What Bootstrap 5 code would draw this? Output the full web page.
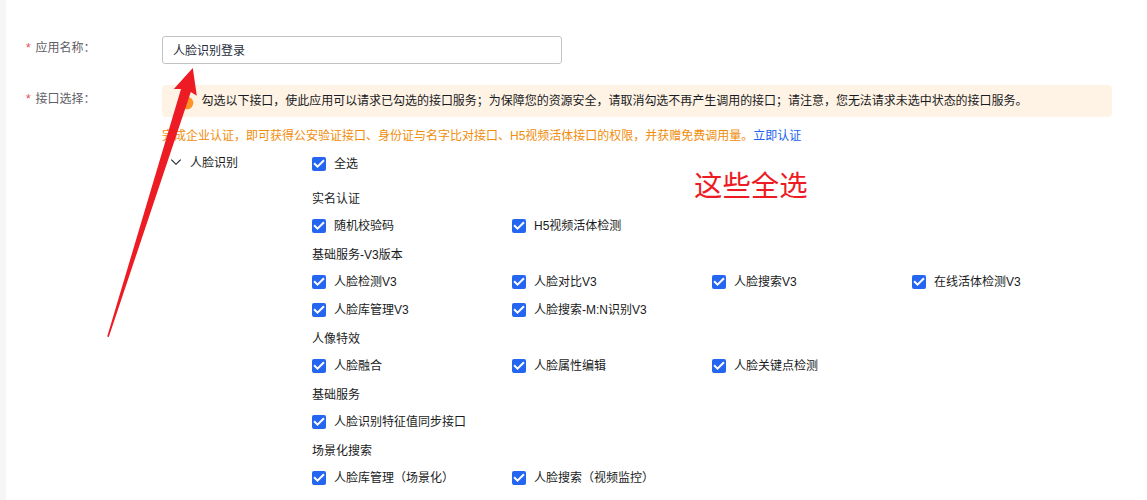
<!DOCTYPE html>
<html lang="zh-CN">
<head>
<meta charset="utf-8">
<meta name="viewport" content="width=device-width, initial-scale=1">
<title>应用</title>
<link href="https://cdn.jsdelivr.net/npm/bootstrap@5.3.0/dist/css/bootstrap.min.css" rel="stylesheet">
<style>
  body { font-family: "Liberation Sans", "Noto Sans CJK SC", sans-serif; font-size: 12px; line-height: 20px; color: #191b22; background: #fff; height: 500px; overflow: hidden; }
  .edge { width: 6px; background: #f6f6f8; }
  .panel { padding: 36px 35px 0 20px; }
  .field-label { width: 136px; color: #5f6066; padding-top: 2px; }
  .field-label.lower { padding-top: 4px; }
  .star { width: 9.5px; color: #e8494c; }
  .name-input { width: 400px; height: 28px; min-height: 0; padding: 0 10px 2px; font-size: 12px; color: #252b3a; border: 1px solid #c3c3c6; border-radius: 3px; }
  .notice { height: 32px; padding: 0 20px 0 18px; margin: 0; font-size: 12px; background: #fff3e6; color: #191b22; border: 0; border-radius: 4px; white-space: nowrap; }
  .notice svg { margin-right: 7.5px; margin-top: 3px; }
  .notice span { letter-spacing: -0.03px; }
  .tip { color: #f08d0b; margin-top: 9px; height: 20px; white-space: nowrap; }
  .tip a { color: #2062ee; }
  .tree { padding-left: 8px; margin-top: 4px; }
  .tree-head { width: 142px; height: 24px; }
  .tree-head svg { margin-right: 8px; }
  .tree-head span { padding-top: 2px; }
  .opt-all { height: 28px; margin-bottom: 6px; }
  .group-title, .opt { height: 28px; line-height: 28px; white-space: nowrap; }
  .group-title { padding-top: 1px; }
  .opt, .opt-all { width: 200px; }
  .opt { line-height: 30px; }
  .form-check-input.tick { width: 14px; height: 14px; margin: 0 8px 0 0; border-radius: 2px; flex: none; border: 0; float: none; }
  .form-check-input.tick:checked { background-color: #2566f0; background-size: 14px 14px; background-image: url("data:image/svg+xml,%3csvg xmlns='http://www.w3.org/2000/svg' viewBox='0 0 14 14'%3e%3cpath fill='none' stroke='%23fff' stroke-width='2' d='M2.1 6.2 5.5 9.6 12 3.2'/%3e%3c/svg%3e"); }
  .arrow-mark { left: 100px; top: 60px; pointer-events: none; }
  .red-note { left: 694px; top: 166px; font-size: 28.4px; line-height: 40px; color: #ed1c24; white-space: nowrap; }
</style>
</head>
<body>
<div class="d-flex h-100 position-relative">
  <div class="edge flex-shrink-0"></div>
  <main class="panel flex-grow-1">
    <div class="d-flex" style="height:49px">
      <label class="field-label d-flex flex-shrink-0" for="appName"><span class="star">*</span>应用名称：</label>
      <input id="appName" class="form-control name-input" type="text" value="人脸识别登录">
    </div>
    <div class="d-flex">
      <div class="field-label lower d-flex flex-shrink-0"><span class="star">*</span>接口选择：</div>
      <div class="flex-grow-1">
        <div class="alert notice d-flex align-items-center">
          <svg class="flex-shrink-0" width="14" height="14" viewBox="0 0 14 14"><circle cx="7" cy="7" r="6.3" fill="#ff9326"/></svg>
          <span>勾选以下接口，使此应用可以请求已勾选的接口服务；为保障您的资源安全，请取消勾选不再产生调用的接口；请注意，您无法请求未选中状态的接口服务。</span>
        </div>
        <div class="tip">完成企业认证，即可获得公安验证接口、身份证与名字比对接口、H5视频活体接口的权限，并获赠免费调用量。<a href="#" class="text-decoration-none">立即认证</a></div>
        <div class="tree d-flex">
          <div class="tree-head d-flex align-items-center flex-shrink-0">
            <svg width="12" height="12" viewBox="0 0 12 12"><path d="M1.3 3.6 6 8.3l4.7-4.7" fill="none" stroke="#191b22" stroke-width="1.1"/></svg>
            <span>人脸识别</span>
          </div>
          <div class="flex-grow-1">
            <label class="opt-all d-flex align-items-center"><input class="form-check-input tick" type="checkbox" checked>全选</label>

            <div class="group-title">实名认证</div>
            <div class="d-flex flex-wrap">
              <label class="opt d-flex align-items-center"><input class="form-check-input tick" type="checkbox" checked><span>随机校验码</span></label>
              <label class="opt d-flex align-items-center"><input class="form-check-input tick" type="checkbox" checked><span>H5视频活体检测</span></label>
            </div>

            <div class="group-title">基础服务-V3版本</div>
            <div class="d-flex flex-wrap">
              <label class="opt d-flex align-items-center"><input class="form-check-input tick" type="checkbox" checked><span>人脸检测V3</span></label>
              <label class="opt d-flex align-items-center"><input class="form-check-input tick" type="checkbox" checked><span>人脸对比V3</span></label>
              <label class="opt d-flex align-items-center"><input class="form-check-input tick" type="checkbox" checked><span>人脸搜索V3</span></label>
              <label class="opt d-flex align-items-center"><input class="form-check-input tick" type="checkbox" checked><span>在线活体检测V3</span></label>
              <label class="opt d-flex align-items-center"><input class="form-check-input tick" type="checkbox" checked><span>人脸库管理V3</span></label>
              <label class="opt d-flex align-items-center"><input class="form-check-input tick" type="checkbox" checked><span>人脸搜索-M:N识别V3</span></label>
            </div>

            <div class="group-title">人像特效</div>
            <div class="d-flex flex-wrap">
              <label class="opt d-flex align-items-center"><input class="form-check-input tick" type="checkbox" checked><span>人脸融合</span></label>
              <label class="opt d-flex align-items-center"><input class="form-check-input tick" type="checkbox" checked><span>人脸属性编辑</span></label>
              <label class="opt d-flex align-items-center"><input class="form-check-input tick" type="checkbox" checked><span>人脸关键点检测</span></label>
            </div>

            <div class="group-title">基础服务</div>
            <div class="d-flex flex-wrap">
              <label class="opt d-flex align-items-center"><input class="form-check-input tick" type="checkbox" checked><span>人脸识别特征值同步接口</span></label>
            </div>

            <div class="group-title">场景化搜索</div>
            <div class="d-flex flex-wrap">
              <label class="opt d-flex align-items-center"><input class="form-check-input tick" type="checkbox" checked><span>人脸库管理（场景化）</span></label>
              <label class="opt d-flex align-items-center"><input class="form-check-input tick" type="checkbox" checked><span>人脸搜索（视频监控）</span></label>
            </div>
          </div>
        </div>
      </div>
    </div>
  </main>
  <div class="red-note position-absolute">这些全选</div>
  <svg class="arrow-mark position-absolute" width="110" height="290" viewBox="100 60 110 290"><path d="M192.8 68 173.8 89 181 88.9 107.2 336.6 108.8 337 190.8 92 196.8 95.8Z" fill="#ed1c24"/></svg>
</div>
<script src="https://cdn.jsdelivr.net/npm/bootstrap@5.3.0/dist/js/bootstrap.bundle.min.js"></script>
</body>
</html>
